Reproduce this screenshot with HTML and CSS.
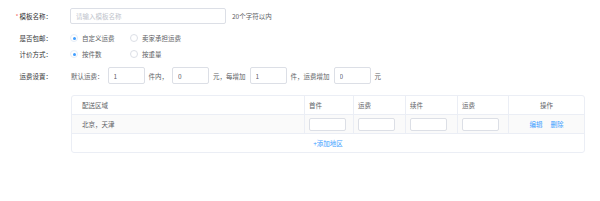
FILE: index.html
```html
<!DOCTYPE html>
<html lang="zh-CN">
<head>
    <meta charset="UTF-8">
    <meta name="viewport" content="width=device-width, initial-scale=1.0">
    <title>运费模板</title>
    <link rel="stylesheet" href="styles.css">
</head>
<body>
    <div class="form">
        <div class="row row-name">
            <div class="label"><span class="star">*</span>模板名称：</div>
            <input class="input input-name" type="text" placeholder="请输入模板名称">
            <span class="tip">20个字符以内</span>
        </div>
        <div class="row row-radio">
            <div class="label">是否包邮：</div>
            <label class="radio checked"><span class="dot"></span>自定义运费</label>
            <label class="radio"><span class="dot"></span>卖家承担运费</label>
        </div>
        <div class="row row-radio row-tight">
            <div class="label">计价方式：</div>
            <label class="radio checked"><span class="dot"></span>按件数</label>
            <label class="radio"><span class="dot"></span>按重量</label>
        </div>
        <div class="row row-fee">
            <div class="label">运费设置：</div>
            <span class="text">默认运费：</span>
            <input class="input input-num" type="text" value="1">
            <span class="text">件内，</span>
            <input class="input input-num" type="text" value="0">
            <span class="text">元，每增加</span>
            <input class="input input-num" type="text" value="1">
            <span class="text">件，运费增加</span>
            <input class="input input-num" type="text" value="0">
            <span class="text">元</span>
        </div>

        <table class="area-table">
            <colgroup>
                <col style="width: 233px">
                <col style="width: 49px">
                <col style="width: 52px">
                <col style="width: 52px">
                <col style="width: 51px">
                <col style="width: 75px">
            </colgroup>
            <thead>
                <tr>
                    <th class="first">配送区域</th>
                    <th>首件</th>
                    <th>运费</th>
                    <th>续件</th>
                    <th>运费</th>
                    <th class="center last">操作</th>
                </tr>
            </thead>
            <tbody>
                <tr class="area-row">
                    <td class="first">北京，天津</td>
                    <td><input class="cell-input" type="text"></td>
                    <td><input class="cell-input" type="text"></td>
                    <td><input class="cell-input" type="text"></td>
                    <td><input class="cell-input" type="text"></td>
                    <td class="center last"><a class="link">编辑</a><a class="link">删除</a></td>
                </tr>
                <tr>
                    <td class="add" colspan="6"><a class="link">+添加地区</a></td>
                </tr>
            </tbody>
        </table>
    </div>
</body>
</html>
```

FILE: styles.css
```css
body {
    margin: 0;
    font-family: "Noto Sans CJK SC", "Noto Sans", sans-serif;
    font-size: 6.5px;
    color: #606266;
    background: #fff;
}
.form {
    padding-top: 8px;
}
.row {
    display: flex;
    align-items: center;
}
.label {
    width: 52px;
    margin-right: 18px;
    text-align: right;
    color: #303133;
    flex-shrink: 0;
}
.star {
    color: #f56c6c;
    margin-right: 1px;
}
.row-name {
    height: 16px;
}
.row-radio {
    height: 12px;
    margin-top: 8px;
}
.row-tight {
    margin-top: 4px;
}
.row-fee {
    height: 17px;
    margin-top: 7px;
}
.input {
    box-sizing: border-box;
    border: 1px solid #dcdfe6;
    border-radius: 2px;
    font-family: inherit;
    font-size: 6.5px;
    color: #606266;
    padding: 0 5px;
    outline: none;
}
.input::placeholder {
    color: #c0c4cc;
}
.input-name {
    width: 156px;
    height: 16px;
}
.tip {
    margin-left: 6px;
}
.radio {
    display: flex;
    align-items: center;
    width: 60px;
}
.dot {
    box-sizing: border-box;
    width: 8px;
    height: 8px;
    border: 1px solid #dcdfe6;
    border-radius: 50%;
    margin-right: 4px;
    position: relative;
}
.radio.checked .dot {
    border-color: #e4ecf7;
}
.radio.checked .dot::after {
    content: "";
    position: absolute;
    left: 1.5px;
    top: 1.5px;
    width: 3px;
    height: 3px;
    border-radius: 50%;
    background: #409eff;
}
.text {
    margin: 0 4px;
}
.row-fee .text:first-of-type {
    margin-left: 1px;
}
.input-num {
    width: 37px;
    height: 17px;
}
.area-table {
    margin: 11px 0 0 71px;
    width: 512px;
    table-layout: fixed;
    border-collapse: separate;
    border-spacing: 0;
    border: 1px solid #ebeef5;
    border-radius: 3px;
}
.area-table th,
.area-table td {
    text-align: left;
    font-weight: normal;
    padding: 0 4px;
    border-right: 1px solid #ebeef5;
    border-bottom: 1px solid #ebeef5;
}
.area-table th {
    height: 18px;
}
.area-table td {
    height: 18px;
}
.area-table .first {
    padding-left: 10px;
}
.area-table .last {
    border-right: none;
}
.area-table .center {
    text-align: center;
}
.area-row td {
    background: #fafafa;
}
.cell-input {
    box-sizing: border-box;
    width: 37px;
    height: 13px;
    border: 1px solid #dcdfe6;
    border-radius: 2px;
    background: #fff;
    display: block;
}
.area-table td.add {
    text-align: center;
    border-right: none;
    border-bottom: none;
}
.link {
    color: #409eff;
    cursor: pointer;
    margin: 0 4px;
}
```
